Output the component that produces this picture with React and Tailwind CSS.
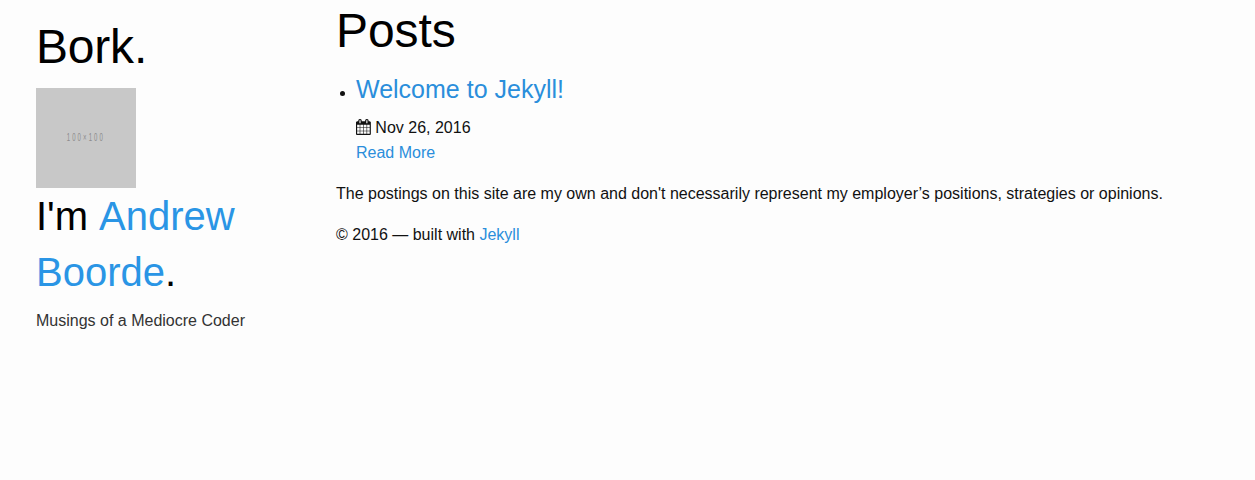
function CalendarIcon() {
  return (
    <svg viewBox="0 0 1664 1792" fill="currentColor" className="mr-[4.5px] mb-[2px] h-4 w-[14.86px] shrink-0" aria-hidden="true">
      <path d="M128 1664h288v-288h-288v288zm352 0h320v-288h-320v288zm-352-352h288v-320h-288v320zm352 0h320v-320h-320v320zm-352-384h288v-288h-288v288zm736 736h320v-288h-320v288zm-384-736h320v-288h-320v288zm768 736h288v-288h-288v288zm-384-352h320v-320h-320v320zm-352-864v-288q0-13-9.500-22.500t-22.500-9.500h-64q-13 0-22.500 9.500t-9.500 22.500v288q0 13 9.500 22.500t22.500 9.500h64q13 0 22.500-9.500t9.500-22.500zm736 864h288v-320h-288v320zm-384-384h320v-288h-320v288zm384 0h288v-288h-288v288zm32-480v-288q0-13-9.500-22.500t-22.500-9.500h-64q-13 0-22.500 9.500t-9.500 22.500v288q0 13 9.500 22.500t22.500 9.500h64q13 0 22.500-9.500t9.500-22.500zm384-64v1280q0 52-38 90t-90 38h-1408q-52 0-90-38t-38-90v-1280q0-52 38-90t90-38h128v-96q0-66 47-113t113-47h64q66 0 113 47t47 113v96h384v-96q0-66 47-113t113-47h64q66 0 113 47t47 113v96h128q52 0 90 38t38 90z" />
    </svg>
  );
}

export default function App() {
  return (
    <div className="flex h-[480px] bg-[#fdfdfd] font-['Liberation_Sans',Arial,sans-serif] text-base text-[#111111]">
      <aside className="ml-9 w-[264px] shrink-0 pt-[11px]">
        <h1 className="text-[48px] leading-[72px] tracking-[-0.2px] text-black">Bork.</h1>
        <div className="mt-[5px] flex size-[100px] items-center justify-center bg-[#c8c8c8] pb-[2px] pr-[1px] text-[10px] text-[#8c8c8c]">
          <span className="inline-block scale-x-[0.6] whitespace-nowrap tracking-[3.5px]">100×100</span>
        </div>
        <h2 className="text-[40px] leading-14 text-black">
          <span className="flex gap-[11px]"><span>I'm</span><a className="text-[#2a95e5]">Andrew</a></span>
          <span className="flex"><a className="text-[#2a95e5]">Boorde</a><span>.</span></span>
        </h2>
        <p className="mt-[9px] leading-6 text-[#333333]">Musings of a Mediocre Coder</p>
      </aside>
      <main className="ml-9 grow">
        <h1 className="h-[59px] text-[48px] leading-[62px] tracking-[-0.1px] text-black">Posts</h1>
        <ul className="list-disc pl-5 pt-3">
          <li>
            <h2 className="text-[25px] leading-9"><a className="text-[#2a8edb]">Welcome to Jekyll!</a></h2>
            <div className="mt-2 flex h-[25px] items-center"><CalendarIcon />Nov 26, 2016</div>
            <a className="block leading-[25px] text-[#2a8edb]">Read More</a>
          </li>
        </ul>
        <p className="mt-4 leading-[25px]">The postings on this site are my own and don't necessarily represent my employer’s positions, strategies or opinions.</p>
        <p className="mt-4 leading-[25px]">© 2016 — built with <a className="text-[#2a8edb]">Jekyll</a></p>
      </main>
    </div>
  );
}
